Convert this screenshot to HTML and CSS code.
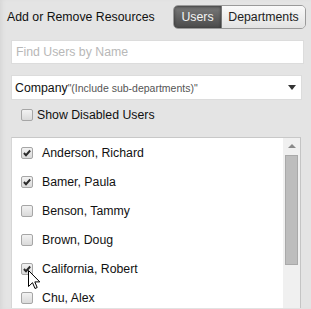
FILE: index.html
```html
<!DOCTYPE html>
<html>
<head>
<meta charset="utf-8">
<link rel="stylesheet" href="styles.css">
</head>
<body>
<div class="panel">
  <div class="header">
    <span class="title">Add or Remove Resources</span>
    <div class="toggle">
      <span class="seg active">Users</span>
      <span class="seg">Departments</span>
    </div>
  </div>
  <div class="search">Find Users by Name</div>
  <div class="select">
    <span class="sel-main">Company</span><span class="sel-sub">"(Include sub-departments)"</span>
    <span class="caret"></span>
  </div>
  <label class="opt">
    <span class="cb"></span>
    <span>Show Disabled Users</span>
  </label>
  <div class="list">
    <div class="rows">
      <div class="row"><span class="cb checked"><svg viewBox="0 0 12 12" width="12" height="12"><path d="M2.3 6 L4.8 8.7 L9.8 3" fill="none" stroke="#2a2a2a" stroke-width="2.3"/></svg></span><span>Anderson, Richard</span></div>
      <div class="row"><span class="cb checked"><svg viewBox="0 0 12 12" width="12" height="12"><path d="M2.3 6 L4.8 8.7 L9.8 3" fill="none" stroke="#2a2a2a" stroke-width="2.3"/></svg></span><span>Bamer, Paula</span></div>
      <div class="row"><span class="cb"></span><span>Benson, Tammy</span></div>
      <div class="row"><span class="cb"></span><span>Brown, Doug</span></div>
      <div class="row"><span class="cb checked"><svg viewBox="0 0 12 12" width="12" height="12"><path d="M2.3 6 L4.8 8.7 L9.8 3" fill="none" stroke="#2a2a2a" stroke-width="2.3"/></svg></span><span>California, Robert</span></div>
      <div class="row"><span class="cb"></span><span>Chu, Alex</span></div>
    </div>
    <div class="scrollbar">
      <span class="up"></span>
      <span class="thumb"></span>
    </div>
  </div>
</div>
<svg class="cursor" width="13" height="20" viewBox="0 0 13 20"><path d="M0.5 0.5 L0.5 16.5 L4.5 12.7 L7 18.5 L9.2 17.5 L6.8 11.9 L11.8 11.9 Z" fill="#fff" stroke="#000" stroke-width="1" stroke-linejoin="miter"/></svg>
</body>
</html>
```
FILE: styles.css
```css
html, body {
  margin: 0;
  padding: 0;
  height: 100%;
  overflow: hidden;
}
body {
  background: #e4e4e4;
  font-family: "Liberation Sans", Arial, sans-serif;
  font-size: 12.3px;
  color: #111;
  position: relative;
  box-shadow: inset 4px 0 4px -2px #d6d6d6;
}
.panel {
  display: flex;
  flex-direction: column;
  padding: 5px 5px 0 11px;
}
.header {
  display: flex;
  align-items: center;
  justify-content: space-between;
  height: 24px;
  margin-left: -4px;
}
.title {
  font-size: 12.3px;
  color: #111;
}
.toggle {
  display: flex;
  height: 24px;
  border: 1px solid #9a9a9a;
  border-radius: 5px;
  overflow: hidden;
  box-sizing: border-box;
  width: 133px;
}
.seg {
  display: flex;
  align-items: center;
  justify-content: center;
  flex: 1;
  background: linear-gradient(#fafafa, #e2e2e2);
  color: #222;
}
.seg.active {
  flex: 0 0 47px;
  background: linear-gradient(#7a7a7a, #4a4a4a);
  color: #f4f4f4;
  box-shadow: inset 0 1px 3px rgba(0,0,0,0.5);
  border-right: 1px solid #777;
}
.search {
  margin-top: 11px;
  height: 24px;
  width: 293px;
  box-sizing: border-box;
  border: 1px solid #dcdcdc;
  background: #fff;
  color: #b8b8b8;
  display: flex;
  align-items: center;
  padding-left: 4px;
}
.select {
  margin-top: 11px;
  height: 25px;
  width: 291px;
  box-sizing: border-box;
  border: 1px solid #dcdcdc;
  background: #fff;
  display: flex;
  align-items: center;
  padding-left: 3px;
  position: relative;
}
.sel-main {
  color: #111;
}
.sel-sub {
  font-size: 10.5px;
  color: #555;
}
.caret {
  margin-left: auto;
  margin-right: 5px;
  width: 0;
  height: 0;
  border-left: 4px solid transparent;
  border-right: 4px solid transparent;
  border-top: 5px solid #333;
}
.opt {
  display: flex;
  align-items: center;
  gap: 4px;
  margin-top: 8px;
  margin-left: 10px;
  height: 14px;
}
.cb {
  width: 12px;
  height: 12px;
  box-sizing: border-box;
  border: 1px solid #a6a6a6;
  border-radius: 2px;
  background: linear-gradient(#f2f2f2, #dadada);
  display: inline-flex;
  align-items: center;
  justify-content: center;
  flex: 0 0 auto;
}
.cb svg {
  display: block;
  width: 10px;
  height: 10px;
}
.list {
  margin-top: 15px;
  width: 290px;
  box-sizing: border-box;
  border-top: 1px solid #c8c8c8;
  border-left: 1px solid #d6d6d6;
  border-right: 1px solid #c4c4c4;
  background: #fff;
  display: flex;
  height: 171px;
  overflow: hidden;
}
.rows {
  flex: 1;
  display: flex;
  flex-direction: column;
}
.row {
  flex: 0 0 29px;
  display: flex;
  align-items: center;
  gap: 9px;
  padding-left: 9px;
}
.scrollbar {
  width: 17px;
  background: #f0f0f0;
  display: flex;
  flex-direction: column;
  align-items: center;
}
.up {
  margin-top: 6px;
  width: 0;
  height: 0;
  border-left: 4px solid transparent;
  border-right: 4px solid transparent;
  border-bottom: 4px solid #8a8a8a;
}
.thumb {
  margin-top: 7px;
  width: 13px;
  height: 110px;
  box-sizing: border-box;
  background: #bdbdbd;
  border: 1px solid #a9a9a9;
}
.cursor {
  position: absolute;
  left: 28px;
  top: 270px;
}
```
